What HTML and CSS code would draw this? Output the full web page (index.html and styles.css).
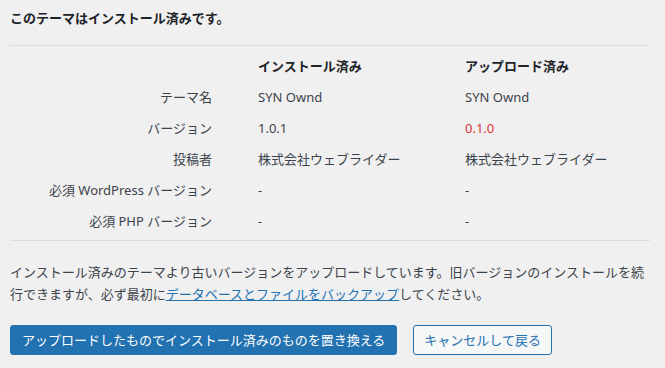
FILE: index.html
```html
<!DOCTYPE html>
<html lang="ja">
<head>
<meta charset="utf-8">
<title>テーマのアップロード</title>
<link rel="stylesheet" href="styles.css">
</head>
<body>
<div class="wrap">
  <h2 class="heading">このテーマはインストール済みです。</h2>
  <div class="compare">
    <div class="row head">
      <div class="label"></div>
      <div class="cell">インストール済み</div>
      <div class="cell">アップロード済み</div>
    </div>
    <div class="row">
      <div class="label">テーマ名</div>
      <div class="cell">SYN Ownd</div>
      <div class="cell">SYN Ownd</div>
    </div>
    <div class="row">
      <div class="label">バージョン</div>
      <div class="cell">1.0.1</div>
      <div class="cell warn">0.1.0</div>
    </div>
    <div class="row">
      <div class="label">投稿者</div>
      <div class="cell">株式会社ウェブライダー</div>
      <div class="cell">株式会社ウェブライダー</div>
    </div>
    <div class="row">
      <div class="label">必須 WordPress バージョン</div>
      <div class="cell">-</div>
      <div class="cell">-</div>
    </div>
    <div class="row">
      <div class="label">必須 PHP バージョン</div>
      <div class="cell">-</div>
      <div class="cell">-</div>
    </div>
  </div>
  <p class="notice">インストール済みのテーマより古いバージョンをアップロードしています。旧バージョンのインストールを続行できますが、必ず最初に<a href="#">データベースとファイルをバックアップ</a>してください。</p>
  <div class="actions">
    <a class="button primary" href="#">アップロードしたものでインストール済みのものを置き換える</a>
    <a class="button secondary" href="#">キャンセルして戻る</a>
  </div>
</div>
</body>
</html>
```
FILE: styles.css
```css
html, body {
  margin: 0;
  padding: 0;
  background: #f0f0f1;
}
body {
  font-family: "Noto Sans", "Noto Sans CJK JP", sans-serif;
  font-size: 13px;
  color: #3c434a;
}
.wrap {
  width: 640px;
  padding: 0 10px;
}
.heading {
  margin: 0;
  padding-top: 9px;
  padding-bottom: 18px;
  font-size: 13px;
  line-height: 18px;
  font-weight: 700;
  color: #1d2327;
  border-bottom: 1px solid #dcdcde;
}
.compare {
  padding: 4px 0 4px;
  border-bottom: 1px solid #dcdcde;
}
.row {
  display: grid;
  grid-template-columns: 202px 253px 1fr;
  height: 31px;
  align-items: center;
  line-height: 18px;
}
.row .label {
  text-align: right;
}
.row .cell {
  color: #3c434a;
}
.row .cell:nth-child(2) {
  padding-left: 46px;
}
.row.head .cell {
  font-weight: 700;
  color: #1d2327;
}
.warn {
  color: #d63638 !important;
}
.notice {
  margin: 20px 0 0;
  line-height: 22px;
  color: #3c434a;
}
.notice a {
  color: #2271b1;
  text-decoration: underline;
}
.actions {
  display: flex;
  gap: 16px;
  margin-top: 20px;
}
.button {
  display: inline-block;
  box-sizing: border-box;
  height: 30px;
  line-height: 28px;
  padding: 0 10px;
  border: 1px solid #2271b1;
  border-radius: 3px;
  font-size: 13px;
  text-decoration: none;
  white-space: nowrap;
}
.primary {
  padding: 0 11px;
  background: #2271b1;
  color: #fff;
}
.secondary {
  background: #f6f7f7;
  color: #2271b1;
}
```
